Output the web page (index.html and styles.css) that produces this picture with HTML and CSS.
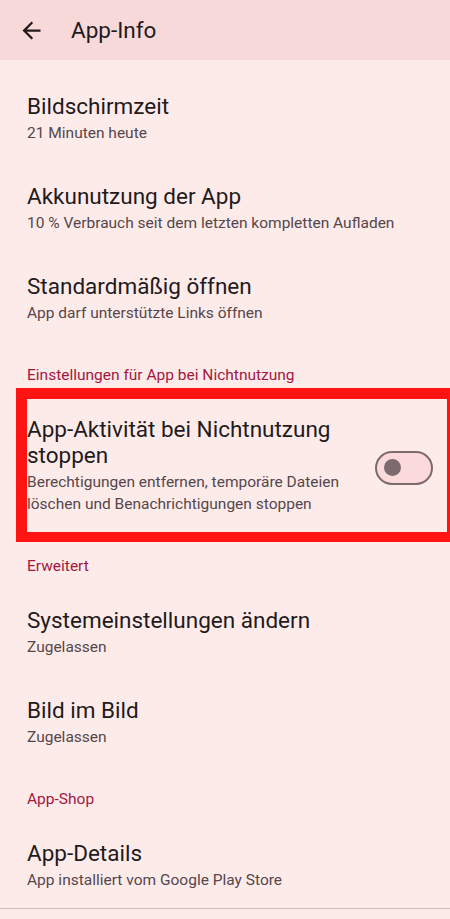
FILE: index.html
```html
<!DOCTYPE html>
<html lang="de">
<head>
  <meta charset="UTF-8" />
  <meta name="viewport" content="width=device-width, initial-scale=1.0"/>
  <title>App-Info</title>
  <link rel="stylesheet" href="styles.css">
</head>
<body>
  <header class="topbar">
    <button class="back" aria-label="Zurück">
      <svg viewBox="0 0 24 24" width="27" height="27">
        <path d="M20 11H7.83l5.59-5.59L12 4l-8 8 8 8 1.41-1.41L7.83 13H20v-2z" fill="#221a1b"/>
      </svg>
    </button>
    <h1 class="title">App-Info</h1>
  </header>

  <main class="list">
    <div class="item">
      <div class="item-title">Bildschirmzeit</div>
      <div class="item-sub">21 Minuten heute</div>
    </div>
    <div class="item">
      <div class="item-title">Akkunutzung der App</div>
      <div class="item-sub">10 % Verbrauch seit dem letzten kompletten Aufladen</div>
    </div>
    <div class="item">
      <div class="item-title">Standardmäßig öffnen</div>
      <div class="item-sub">App darf unterstützte Links öffnen</div>
    </div>

    <div class="section">Einstellungen für App bei Nichtnutzung</div>
    <div class="item item-switch">
      <div class="item-text">
        <div class="item-title">App-Aktivität bei Nichtnutzung stoppen</div>
        <div class="item-sub">Berechtigungen entfernen, temporäre Dateien löschen und Benachrichtigungen stoppen</div>
      </div>
      <div class="switch"><span class="thumb"></span></div>
      <div class="highlight"></div>
    </div>

    <div class="section">Erweitert</div>
    <div class="item">
      <div class="item-title">Systemeinstellungen ändern</div>
      <div class="item-sub">Zugelassen</div>
    </div>
    <div class="item">
      <div class="item-title">Bild im Bild</div>
      <div class="item-sub">Zugelassen</div>
    </div>

    <div class="section">App-Shop</div>
    <div class="item item-last">
      <div class="item-title">App-Details</div>
      <div class="item-sub">App installiert vom Google Play Store</div>
    </div>
  </main>
</body>
</html>
```

FILE: styles.css
```css
body {
  margin: 0;
  font-family: Roboto, 'Noto Sans', sans-serif;
  background: #fdebea;
  color: #221a1b;
  overflow-x: hidden;
}

.topbar {
  height: 60px;
  background: #f7d9da;
  display: flex;
  align-items: center;
  padding-left: 18px;
}

.back {
  width: 27px;
  height: 27px;
  padding: 0;
  border: none;
  background: none;
  display: flex;
}

.title {
  margin: 0 0 0 26px;
  font-size: 22.5px;
  font-weight: 400;
  line-height: 28px;
}

.list {
  padding-top: 14px;
}

.item {
  padding: 19px 24px 20px 27px;
}

.item-title {
  font-size: 22.5px;
  line-height: 26px;
}

.item-sub {
  margin-top: 3px;
  font-size: 15.5px;
  line-height: 22px;
  color: #55474a;
}

.section {
  padding: 21px 27px 12px;
  font-size: 15.5px;
  line-height: 20px;
  color: #a3173f;
}

.item-switch {
  position: relative;
  display: flex;
  align-items: center;
  gap: 20px;
  padding-right: 17px;
}

.item-text {
  flex: 1;
}

.switch {
  box-sizing: border-box;
  width: 58px;
  height: 34px;
  margin-top: 4px;
  border: 2.5px solid #7d6a6d;
  border-radius: 17px;
  background: #fadadb;
  display: flex;
  align-items: center;
  padding-left: 7px;
  flex-shrink: 0;
}

.thumb {
  width: 17px;
  height: 17px;
  border-radius: 50%;
  background: #7d6a6d;
}

.highlight {
  position: absolute;
  left: 16px;
  top: -9px;
  width: 420px;
  bottom: -7px;
  border: 11px solid #ff1414;
  border-bottom-width: 10px;
}

.item-last {
  padding-bottom: 17px;
  border-bottom: 1px solid #cbbcbd;
}
```
